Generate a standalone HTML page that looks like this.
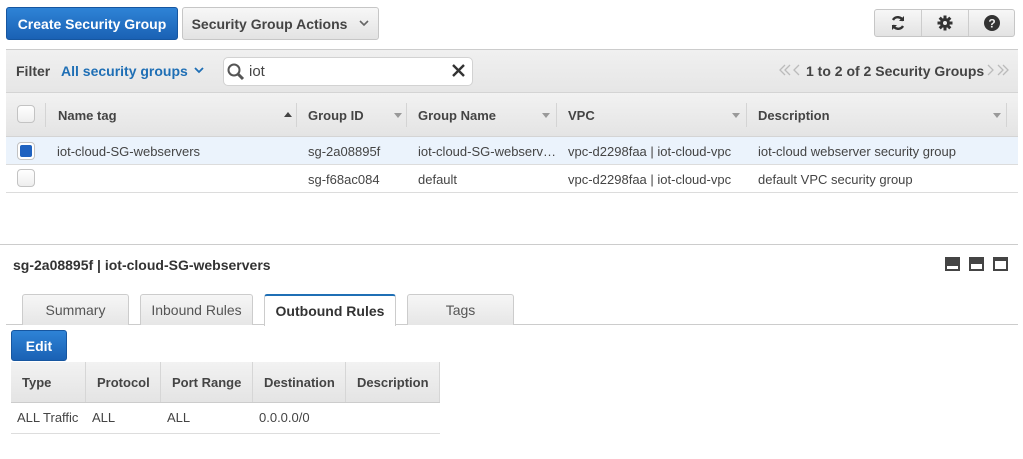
<!DOCTYPE html>
<html><head><meta charset="utf-8"><style>
*{box-sizing:border-box;margin:0;padding:0}
body{width:1023px;height:459px;background:#fff;font-family:"Liberation Sans",Arial,sans-serif;font-size:14px;color:#444;position:relative;overflow:hidden}
.abs{position:absolute}
.btnb{background:linear-gradient(#2e83d6,#1a61b4);border:1px solid #1656a0;border-radius:3px;color:#fff;font-weight:bold;display:flex;align-items:center;justify-content:center}
.btng{background:linear-gradient(#f7f7f7,#e3e3e3);border:1px solid #c6c6c6;border-radius:3px;color:#444;font-weight:bold;display:flex;align-items:center;justify-content:center}
.hdr{background:linear-gradient(#f2f2f2,#e4e4e4)}
.cb{width:18px;height:18px;border:1px solid #c3c3c3;border-radius:4px;background:linear-gradient(#fff,#eee)}
.sep{position:absolute;top:10px;width:1px;height:24px;background:#d4d4d4}
.tri{position:absolute;top:20px;width:0;height:0;border-left:4px solid transparent;border-right:4px solid transparent;border-top:5px solid #999}
.tab{position:absolute;top:294px;height:31px;border:1px solid #ccc;border-bottom:none;border-radius:3px 3px 0 0;background:linear-gradient(#f6f6f6,#e6e6e6);display:flex;align-items:center;justify-content:center;color:#555}
.th{position:absolute;top:362px;height:40px;display:flex;align-items:center;font-weight:bold;color:#444;border-right:1px solid #d6d6d6;padding-left:11px;font-size:13px}
.t13{font-size:13px}
</style></head><body>
<div class="abs btnb" style="left:6px;top:7px;width:172px;height:33px">Create Security Group</div>
<div class="abs btng" style="left:182px;top:7px;width:197px;height:33px">Security Group Actions<svg style="margin-left:12px" width="10" height="7" viewBox="0 0 10 7"><path d="M1 1l4 4 4-4" fill="none" stroke="#666" stroke-width="1.6"/></svg></div>
<div class="abs btng" style="left:874px;top:9px;width:141px;height:28px;padding:0;justify-content:flex-start">
 <div style="width:47px;height:100%;border-right:1px solid #ccc;display:flex;align-items:center;justify-content:center"><svg width="16" height="16" viewBox="0 0 16 16"><path d="M13 6A5.5 5.5 0 0 0 3 5" fill="none" stroke="#333" stroke-width="2.4"/><path d="M9 6h5V1z" fill="#333"/><path d="M3 10a5.5 5.5 0 0 0 10 1" fill="none" stroke="#333" stroke-width="2.4"/><path d="M7 10H2v5z" fill="#333"/></svg></div>
 <div style="width:47px;height:100%;border-right:1px solid #ccc;display:flex;align-items:center;justify-content:center"><svg width="16" height="16" viewBox="0 0 16 16"><g fill="#333"><circle cx="8" cy="8" r="5"/><rect x="6.5" y="0.5" width="3" height="15"/><rect x="0.5" y="6.5" width="15" height="3"/><rect x="6.5" y="0.5" width="3" height="15" transform="rotate(45 8 8)"/><rect x="6.5" y="0.5" width="3" height="15" transform="rotate(-45 8 8)"/></g><circle cx="8" cy="8" r="2" fill="#eee"/></svg></div>
 <div style="width:45px;height:100%;display:flex;align-items:center;justify-content:center"><svg width="16" height="16" viewBox="0 0 16 16"><circle cx="8" cy="8" r="8" fill="#333"/><text x="8" y="12.5" font-size="12" font-weight="bold" text-anchor="middle" fill="#eee" font-family="Liberation Sans">?</text></svg></div>
</div>
<div class="abs" style="left:6px;top:49px;width:1012px;height:43px;background:linear-gradient(#f0f0f0,#e6e6e6);border-top:1px solid #ccc"></div>
<div class="abs" style="left:16px;top:63px;font-weight:bold;color:#444">Filter</div>
<div class="abs" style="left:61px;top:63px;font-weight:bold;color:#1f6fb5">All security groups</div>
<svg class="abs" style="left:194px;top:67px" width="10" height="7" viewBox="0 0 10 7"><path d="M1 1l4 4 4-4" fill="none" stroke="#1f6fb5" stroke-width="1.8"/></svg>
<div class="abs" style="left:223px;top:57px;width:250px;height:29px;background:#fff;border:1px solid #d2d2d2;border-radius:5px"></div>
<svg class="abs" style="left:226px;top:62px" width="20" height="20" viewBox="0 0 20 20"><circle cx="8" cy="8" r="5.5" fill="none" stroke="#555" stroke-width="2"/><path d="M12 12l5 5" stroke="#555" stroke-width="3"/></svg>
<div class="abs" style="left:249px;top:63px;color:#444;font-size:15px">iot</div>
<svg class="abs" style="left:451px;top:63px" width="15" height="15" viewBox="0 0 15 15"><path d="M2 2l11 11M13 2L2 13" stroke="#333" stroke-width="2.4"/></svg>
<svg class="abs" style="left:779px;top:63px" width="24" height="14" viewBox="0 0 24 14"><path d="M6 2L1 7l5 5M11 2L6 7l5 5M20 2l-5 5 5 5" fill="none" stroke="#bbb" stroke-width="1.3"/></svg>
<div class="abs" style="left:806px;top:63px;font-weight:bold;color:#444">1 to 2 of 2 Security Groups</div>
<svg class="abs" style="left:986px;top:63px" width="24" height="14" viewBox="0 0 24 14"><path d="M2 2l5 5-5 5M12 2l5 5-5 5M17 2l5 5-5 5" fill="none" stroke="#bbb" stroke-width="1.3"/></svg>
<div class="abs hdr t13" style="left:6px;top:92px;width:1012px;height:45px;border-top:1px solid #d4d4d4;border-bottom:1px solid #d4d4d4">
 <div class="cb" style="position:absolute;left:11px;top:12px"></div>
 <div class="sep" style="left:39px"></div>
 <div style="position:absolute;left:52px;top:15px;font-weight:bold">Name tag</div>
 <div class="abs" style="left:278px;top:19px;border-left:4px solid transparent;border-right:4px solid transparent;border-bottom:5px solid #444"></div>
 <div class="sep" style="left:290px"></div>
 <div style="position:absolute;left:302px;top:15px;font-weight:bold">Group ID</div>
 <div class="tri" style="left:388px"></div>
 <div class="sep" style="left:400px"></div>
 <div style="position:absolute;left:412px;top:15px;font-weight:bold">Group Name</div>
 <div class="tri" style="left:536px"></div>
 <div class="sep" style="left:550px"></div>
 <div style="position:absolute;left:562px;top:15px;font-weight:bold">VPC</div>
 <div class="tri" style="left:726px"></div>
 <div class="sep" style="left:740px"></div>
 <div style="position:absolute;left:752px;top:15px;font-weight:bold">Description</div>
 <div class="tri" style="left:987px"></div>
 <div class="sep" style="left:1000px"></div>
</div>
<div class="abs t13" style="left:6px;top:137px;width:1012px;height:28px;background:#ebf3fc;border-bottom:1px solid #dcdcdc">
 <div class="cb" style="position:absolute;left:11px;top:5px;background:#fff;padding:2px"><div style="width:12px;height:12px;background:#1f62c0;border-radius:2px"></div></div>
 <div style="position:absolute;left:51px;top:7px">iot-cloud-SG-webservers</div>
 <div style="position:absolute;left:302px;top:7px">sg-2a08895f</div>
 <div style="position:absolute;left:412px;top:7px">iot-cloud-SG-webserv…</div>
 <div style="position:absolute;left:562px;top:7px">vpc-d2298faa | iot-cloud-vpc</div>
 <div style="position:absolute;left:752px;top:7px">iot-cloud webserver security group</div>
</div>
<div class="abs t13" style="left:6px;top:165px;width:1012px;height:28px;border-bottom:1px solid #dcdcdc">
 <div class="cb" style="position:absolute;left:11px;top:4px"></div>
 <div style="position:absolute;left:302px;top:7px">sg-f68ac084</div>
 <div style="position:absolute;left:412px;top:7px">default</div>
 <div style="position:absolute;left:562px;top:7px">vpc-d2298faa | iot-cloud-vpc</div>
 <div style="position:absolute;left:752px;top:7px">default VPC security group</div>
</div>
<div class="abs" style="left:0;top:244px;width:1018px;height:1px;background:#ccc"></div>
<div class="abs" style="left:13px;top:257px;font-weight:bold;color:#333">sg-2a08895f | iot-cloud-SG-webservers</div>
<div class="abs" style="left:945px;top:257px;width:15px;height:14px;background:#444"><div style="position:absolute;left:2px;right:2px;bottom:2px;height:3px;background:#fff"></div></div>
<div class="abs" style="left:969px;top:257px;width:15px;height:14px;background:#444"><div style="position:absolute;left:2px;right:2px;bottom:2px;height:5px;background:#fff"></div></div>
<div class="abs" style="left:993px;top:257px;width:15px;height:14px;background:#444"><div style="position:absolute;left:2px;right:2px;bottom:2px;height:8px;background:#fff"></div></div>
<div class="abs" style="left:6px;top:324px;width:1012px;height:1px;background:#ccc"></div>
<div class="tab" style="left:22px;width:107px">Summary</div>
<div class="tab" style="left:140px;width:113px">Inbound Rules</div>
<div class="tab" style="left:264px;width:132px;height:32px;background:#fff;border-top:2px solid #1f6fb5;font-weight:bold;color:#333">Outbound Rules</div>
<div class="tab" style="left:407px;width:107px">Tags</div>
<div class="abs btnb" style="left:11px;top:330px;width:56px;height:31px">Edit</div>
<div class="abs hdr" style="left:11px;top:362px;width:429px;height:41px;border-bottom:1px solid #ccc"></div>
<div class="th" style="left:11px;width:75px">Type</div>
<div class="th" style="left:86px;width:75px">Protocol</div>
<div class="th" style="left:161px;width:92px">Port Range</div>
<div class="th" style="left:253px;width:93px">Destination</div>
<div class="th" style="left:346px;width:94px">Description</div>
<div class="abs" style="left:11px;top:403px;width:429px;height:31px;border-bottom:1px solid #ddd"></div>
<div class="abs t13" style="left:17px;top:410px">ALL Traffic</div>
<div class="abs t13" style="left:92px;top:410px">ALL</div>
<div class="abs t13" style="left:167px;top:410px">ALL</div>
<div class="abs t13" style="left:259px;top:410px">0.0.0.0/0</div>
</body></html>
